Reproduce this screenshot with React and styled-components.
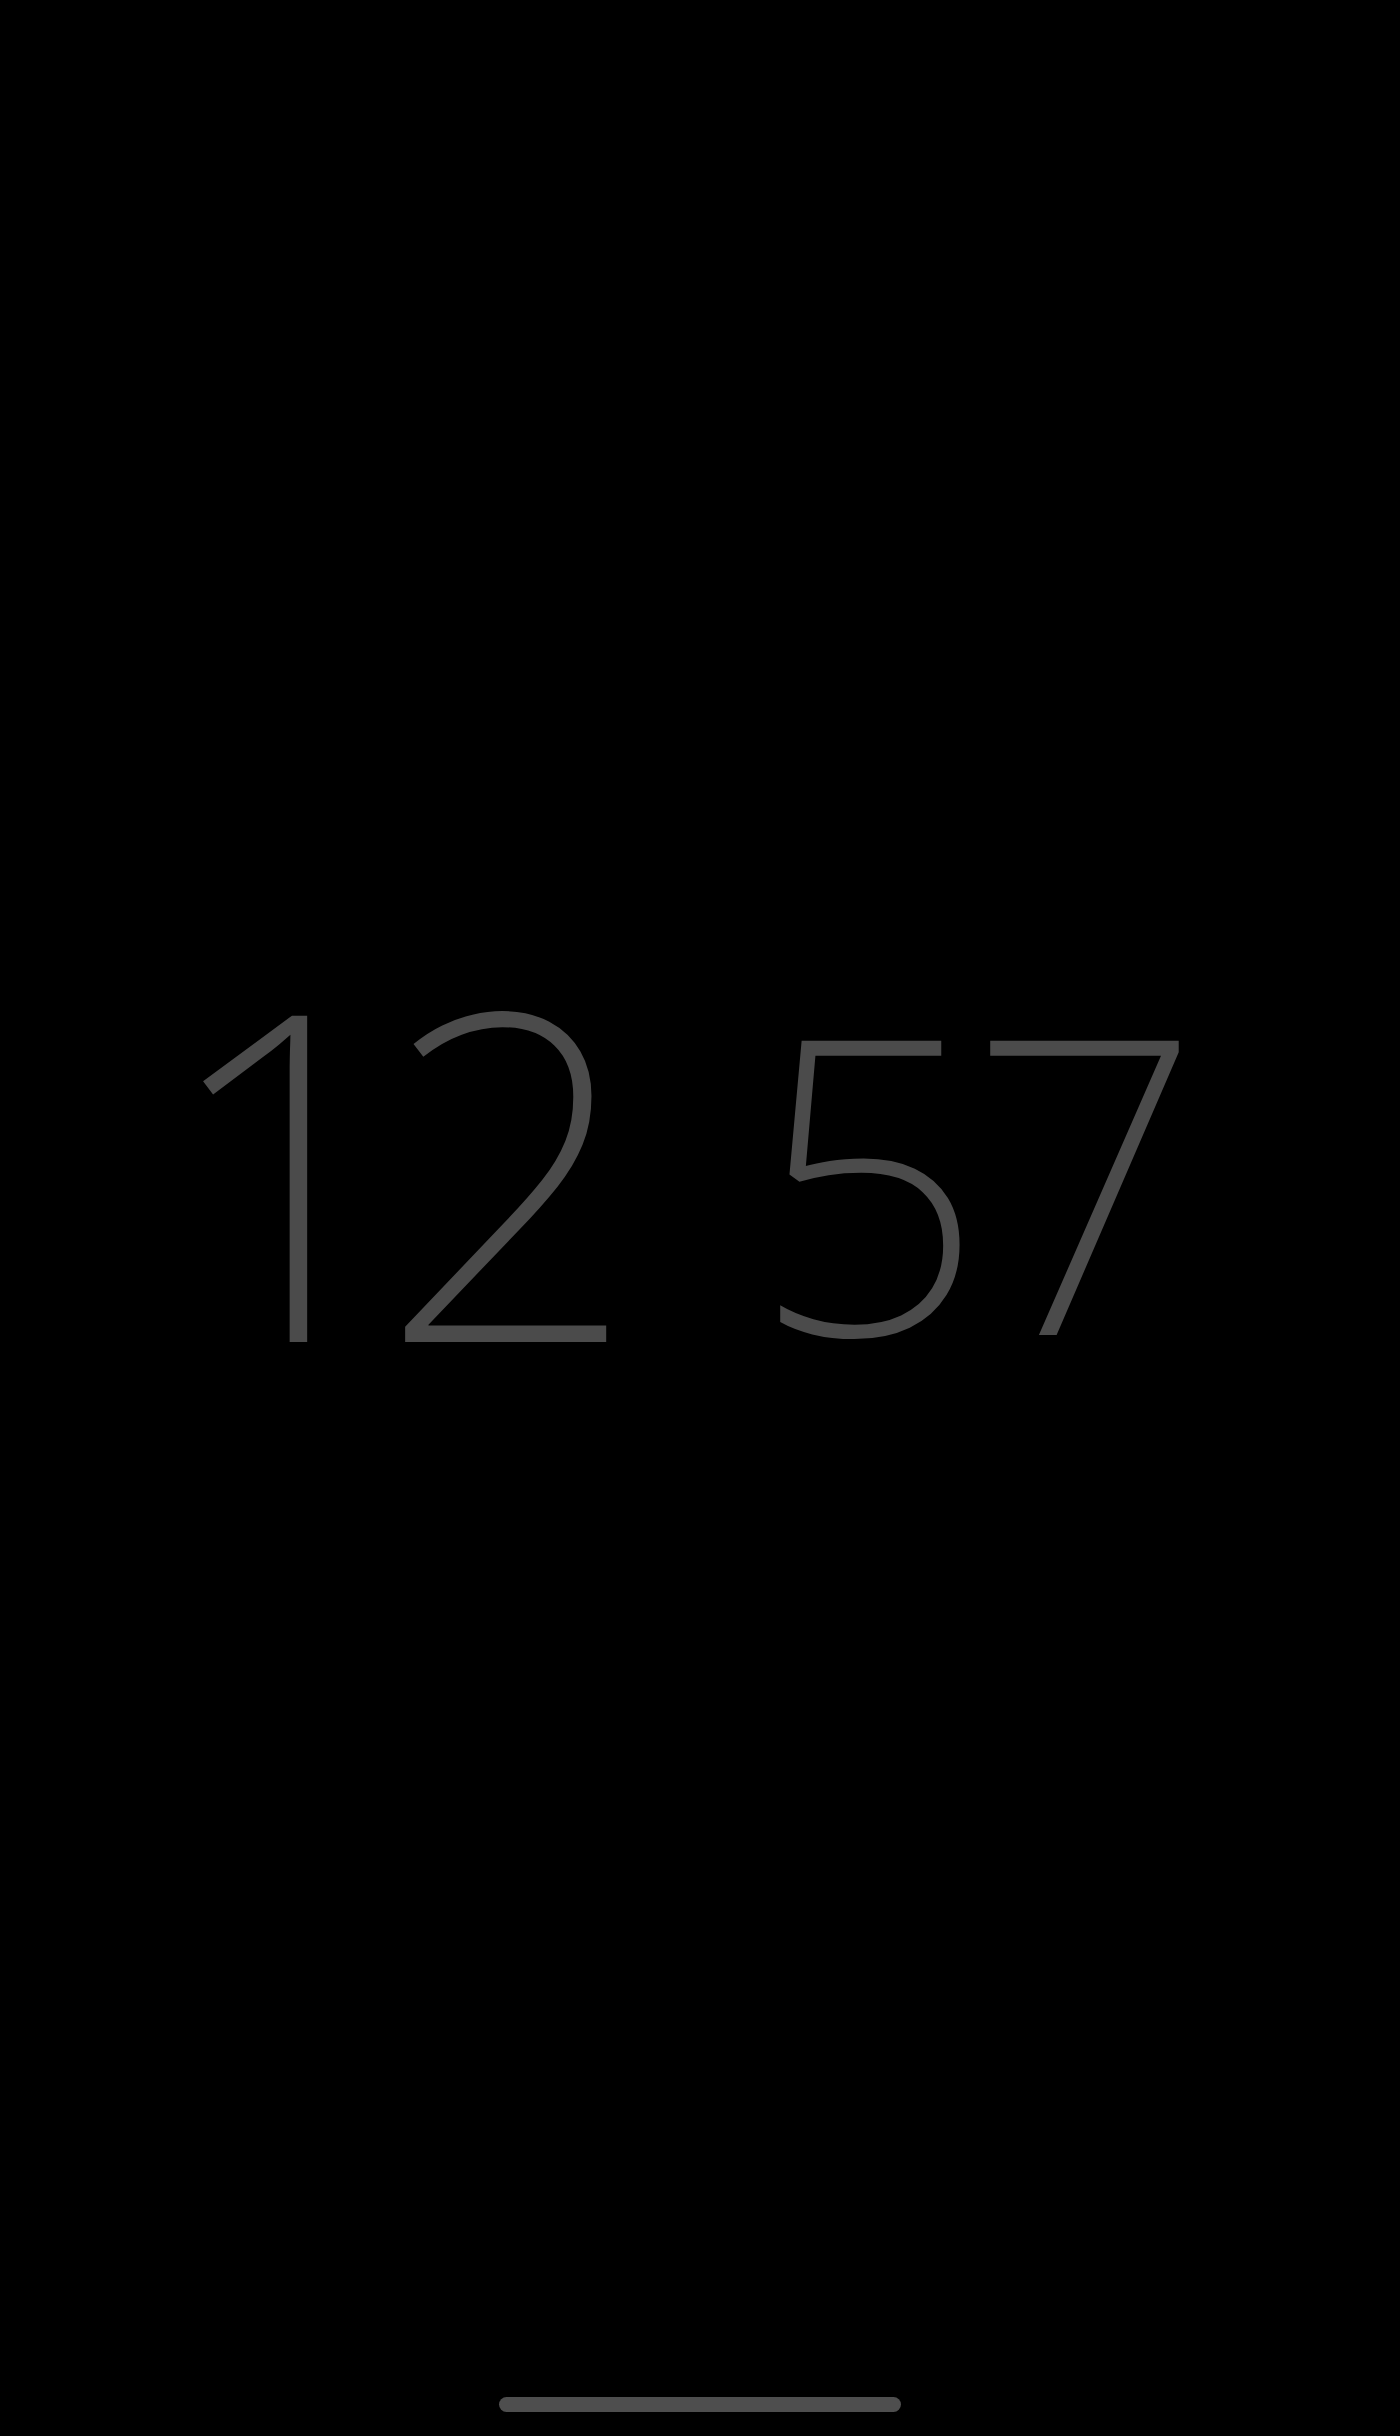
import React from "react";
import styled, { createGlobalStyle } from "styled-components";

const GlobalStyle = createGlobalStyle`
  html, body {
    margin: 0;
    padding: 0;
    background: #000;
  }
  body {
    font-family: "Noto Sans", sans-serif;
  }
`;

const Screen = styled.div`
  width: 1400px;
  height: 2436px;
  background: #000;
  display: flex;
  flex-direction: column;
  align-items: center;
  overflow: hidden;
`;

const ClockArea = styled.main`
  flex: 1;
  display: flex;
  align-items: center;
  justify-content: center;
  width: 100%;
  box-sizing: border-box;
  padding: 0 58px 68px 0;
`;

const Clock = styled.div`
  display: flex;
  align-items: center;
  gap: ${(p) => p.$gap}px;
  color: #4b4b4b;
  font-family: "Noto Sans", sans-serif;
  font-weight: 160;
  line-height: 1;
`;

const Digits = styled.span`
  display: block;
  font-size: ${(p) => p.$size}px;
  letter-spacing: ${(p) => p.$spacing}px;
  margin-top: ${(p) => p.$drop || 0}px;
`;

const HomeBar = styled.div`
  width: 402px;
  height: 15px;
  border-radius: 8px;
  background: #4e4e4e;
  margin-bottom: 24px;
  flex-shrink: 0;
`;

export default function App() {
  return (
    <>
      <GlobalStyle />
      <Screen>
        <ClockArea>
          <Clock $gap={150}>
            <Digits $size={457} $spacing={-39}>12</Digits>
            <Digits $size={412} $spacing={-18} $drop={22}>57</Digits>
          </Clock>
        </ClockArea>
        <HomeBar />
      </Screen>
    </>
  );
}
